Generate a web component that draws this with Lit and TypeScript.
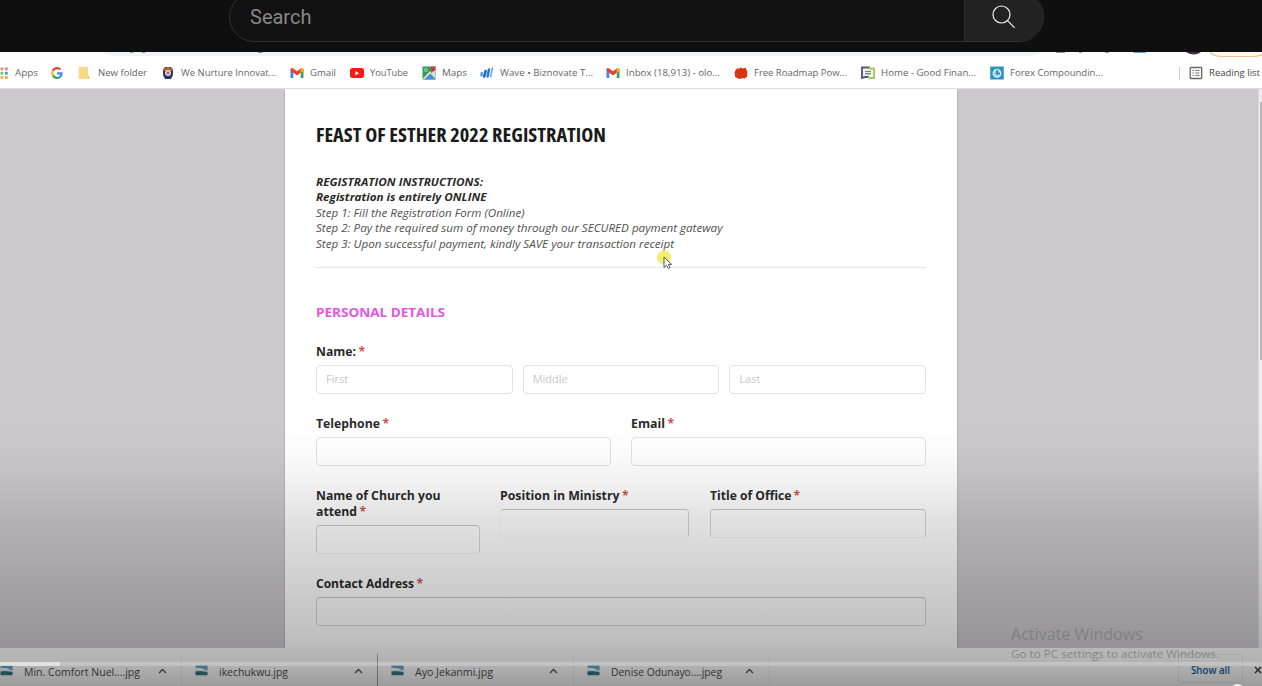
import { LitElement, html, css, svg, nothing } from "lit";
import { customElement, property } from "lit/decorators.js";

/** A single line of text condensed or widened to a given width. */
@customElement("fit-text")
class FitText extends LitElement {
  @property({ type: Number }) w = 0;
  @property() text = "";
  static styles = css`
    :host { display: block; white-space: nowrap; flex: none; }
    .inner { display: inline-block; transform-origin: 0 50%; white-space: pre; }
  `;
  render() {
    return html`<span class="inner">${this.text}</span>`;
  }
  updated() {
    this.style.width = this.w + "px";
    const el = this.renderRoot.querySelector(".inner") as HTMLElement;
    const natural = el.getBoundingClientRect().width;
    if (natural > 0 && this.w > 0) el.style.transform = `scaleX(${this.w / natural})`;
  }
}

const gmail = svg`<path d="M.5 3.500v8.500h2.800V6z" fill="#4285f4"/><path d="M13.500 3.500v8.500h-2.800V6z" fill="#34a853"/>
  <path d="M.5 3.500C.5 2 2 1.500 3.300 2.500L7 5.300l3.700-2.800c1.300-1 2.800-.5 2.800 1v1.300L7 9.600.5 4.800z" fill="#ea4335"/>
  <path d="M10.700 2.500c1.300-1 2.800-.5 2.800 1v1.300l-2.800 2.100z" fill="#fbbc04"/>`;

const icons: Record<string, unknown> = {
  apps: svg`<g><rect x="4.500" y="1.500" width="2.800" height="2.800" fill="#f08a80"/><rect x="9" y="1.500" width="2.800" height="2.800" fill="#e98a62"/>
    <rect x="4.500" y="5.800" width="2.800" height="2.800" fill="#77b88a"/><rect x="9" y="5.800" width="2.800" height="2.800" fill="#5f90e0"/>
    <rect x="4.500" y="10.100" width="2.800" height="2.800" fill="#efb45e"/><rect x="9" y="10.100" width="2.800" height="2.800" fill="#f0b540"/></g>`,
  google: svg`<g fill="none" stroke-width="2.200"><path d="M10.500 3.600A4.600 4.600 0 0 0 2.800 4.900" stroke="#ea4335"/>
    <path d="M2.800 4.900a4.700 4.700 0 0 0 0 4.400" stroke="#fbbc05"/><path d="M2.800 9.300a4.700 4.700 0 0 0 7.400 1.400" stroke="#34a853"/>
    <path d="M10.100 10.700A4.500 4.500 0 0 0 11.500 7.300H7" stroke="#4285f4"/></g>`,
  folder: svg`<path d="M.7 1H10v8.500l1.300 1V13H.7z" fill="#f9da84"/><path d="M10 9.500l1.300 1V13H10z" fill="#eec66c"/>`,
  badge: svg`<path d="M1.900 3.500L4 1h6l2.100 2.500-.3 6L10 13H4L2.200 9.500z" fill="#2b335f"/><path d="M1.700 4.800C2.200.2 11.800.2 12.300 4.800L10 5H4z" fill="#b4683a"/>
    <circle cx="7" cy="7" r="3" fill="#dccbd2"/><circle cx="7" cy="7" r="1.300" fill="#846a8c"/>`,
  gmail,
  youtube: svg`<rect x="0" y="2" width="14" height="10" rx="2.500" fill="#f51b12"/><path d="M5.400 5v4.300L9.100 7.200z" fill="#fff"/>`,
  maps: svg`<path d="M.5.500h13v13H.5z" fill="#2f9d5b"/><path d="M13.500.5v8L8.500 4.500V.5z" fill="#cf4a3d"/>
    <path d="M1.500 13.500L7.200 8.200l5.800 5.300z" fill="#4c8df5"/><path d="M8 7.500L13.500 4v9z" fill="#d8dadd"/><path d="M.7 12.800L8 5l1 2-7 6.500z" fill="#e8dfc4"/>
    <circle cx="4" cy="4" r="1.600" fill="#57b47d" stroke="#a9d9bb" stroke-width=".7"/><circle cx="11.300" cy="3.500" r="1.100" fill="#94322a"/>`,
  wave: svg`<g stroke-linecap="round" stroke-width="2.500"><path d="M1.800 7l-.3 2.300" stroke="#4b9be9"/><path d="M5.600 5L4.200 10.500" stroke="#1a62cf"/>
    <path d="M9 3.500L7.600 10.500" stroke="#2a76da"/><path d="M12.500 2L10.700 10.500" stroke="#65b1ef" stroke-width="1.700"/></g>`,
  roadmap: svg`<path d="M3 2.300l2 .4L7 1.500l2 1L11.700 1.800l.6 2 1.200 2-.4 2 .1 2.700-2.500 2-2.500-.3-2.700.7L3 11.900.8 10.500l.2-2L.5 6.500 1.500 4.300z" fill="#d8350f"/>`,
  home: svg`<path d="M1 1.500h7v9.500H4L1 12z" fill="#f2f3f7" stroke="#555c74" stroke-width="1.900"/><path d="M7 2.500h6v9.500H7.500" fill="#f1f7e1" stroke="#a4c865" stroke-width="1.900"/>
    <path d="M4 5.500h6M4 7.600h6" stroke="#728192" stroke-width="1.100"/>`,
  forex: svg`<path d="M.2.500h13.600v13H.2z" fill="#2c95bd"/><circle cx="7" cy="7.300" r="3.700" fill="#8ecbe3" stroke="#d9f0f9" stroke-width="1.500"/>
    <path d="M7 3.500v4h3" stroke="#2381ad" stroke-width="1.300" fill="none"/>`,
  list: svg`<rect x="1.200" y="1.500" width="11.500" height="11" rx=".8" fill="none" stroke="#666" stroke-width="1.300"/>
    <path d="M3.500 4.500h1.600M3.500 7h1.600M3.500 9.500h1.600M6.300 4.500h4.200M6.300 7h4.200M6.300 9.500h4.200" stroke="#777" stroke-width="1.100"/>`,
  image: svg`<path d="M1.500 1.500h12v11h-12z" fill="#d3e0e6"/><path d="M1.500 1.500h12v5L9 4.500l-7.500-.7z" fill="#5ea6cf"/><path d="M1.500 3.800l6 .5 4 2.200-10 .5z" fill="#edf4f6"/><path d="M1.500 7.500l4-.6 8 1.200v3h-12z" fill="#37757d"/>`,
};
const icon = (name: string) => html`<svg class="ico" viewBox="0 0 14 14">${icons[name]}</svg>`;

/* icon, label, slot width, label width */
const bookmarks: [string, string, number, number][] = [
  ["apps", "Apps", 54, 23],
  ["google", "", 28, 0],
  ["folder", "New folder", 83, 49],
  ["badge", "We Nurture Innovat...", 129, 95],
  ["gmail", "Gmail", 60, 26],
  ["youtube", "YouTube", 71.5, 38],
  ["maps", "Maps", 58.5, 25],
  ["wave", "Wave • Biznovate T...", 126, 93],
  ["gmail", "Inbox (18,913) - olo...", 128, 94],
  ["roadmap", "Free Roadmap Pow...", 127, 93],
  ["home", "Home - Good Finan...", 129, 95],
  ["forex", "Forex Compoundin...", 149, 93],
];

/* label, label width, slot width, caret offset */
const downloads: [string, number, number, number][] = [
  ["Min. Comfort Nuel....jpg", 116, 195, 157],
  ["ikechukwu.jpg", 69, 196, 158],
  ["Ayo Jekanmi.jpg", 78, 196, 157],
  ["Denise Odunayo....jpeg", 111, 196, 157],
];

@customElement("app-root")
class AppRoot extends LitElement {
  static styles = css`
    :host { display: block; width: 1262px; height: 686px; overflow: hidden; position: relative; background: #0f0f0f; font-family: "Open Sans", sans-serif; }
    * { box-sizing: border-box; }
    .top { height: 52px; display: flex; align-items: flex-start; padding-left: 229px; background: #0f0f0f; overflow: hidden; }
    .shape { display: flex; width: 815px; height: 50px; margin-top: -8px; border: 1px solid #303030; border-radius: 25px; overflow: hidden; background: #121212; flex: none; }
    .query { width: 734px; padding: 7px 0 0 20px; color: #888; font: 400 20px/34px Roboto, sans-serif; }
    .go { flex: 1; background: #222; border-left: 1px solid #303030; padding: 11px 0 0 27px; }
    .go svg { width: 24px; height: 24px; display: block; }
    .video { height: 634px; background: #fff; display: flex; flex-direction: column; color: #111; }
    .address { height: 5px; flex: none; background: #fff; }
    .address svg { display: block; width: 1262px; height: 5px; }
    .marks { height: 32px; flex: none; display: flex; align-items: center; background: #fff; font-size: 9.800px; line-height: 16px; color: #666; }
    .mark { display: flex; align-items: center; gap: 6px; flex: none; }
    .mark:first-child { margin-left: -4px; gap: 5px; }
    .ico { width: 14px; height: 14px; display: block; flex: none; }
    .reading { display: flex; align-items: center; gap: 6px; border-left: 1px solid #ccc; height: 13px; padding-left: 9px; margin-left: 40px; color: #444; }
    .canvas { height: 559px; flex: none; background: #cbc9cc; display: flex; padding-left: 285px; box-shadow: 0 -1px #dedede; }
    .page { width: 672px; background: #fff; padding: 32px 31px 0 31px; box-shadow: 0 0 2px #999; clip-path: inset(0 -3px); }
    .rail { margin-left: auto; width: 4px; background: #ececec; border-left: 1px solid #dadada; }
    .thumb { margin: 13px 0 0 1px; height: 258px; background: #b9b9bb; }
    .title { font-size: 19.500px; line-height: 28px; font-weight: 700; font-stretch: 75%; color: #1a1a1a; }
    .steps { margin-top: 25px; font-size: 11.200px; line-height: 15.400px; font-style: italic; color: #505050; border-bottom: 1px solid #e6e6e6; height: 94px; }
    .strong { font-weight: 700; color: #2a2a2a; }
    .section { margin-top: 34px; font-size: 13px; line-height: 20px; font-weight: 700; color: #e456e0; }
    .row { display: flex; align-items: flex-start; }
    .label { display: flex; gap: 3px; font-size: 12.200px; font-weight: 700; line-height: 16px; color: #2a2a2a; }
    .req { color: #d0504b; margin-left: -.5px; }
    .field { height: 29px; border: 1px solid #e2e2e5; border-radius: 4px; font-size: 11px; line-height: 26px; color: #c8c8c8; padding-left: 9px; }
    .faint { border-color: #c8c8c8 #d6d6d6 #d8d8d8 #d6d6d6; }
    .short { border-bottom-color: #f0f0f0; }
    .open { border-color: #c8c8c8 #d4d4d4 #f8f8f8 #f8f8f8; }
    .names { margin-top: 5px; gap: 10px; }
    .names .field { flex: 1; }
    .g22 { margin-top: 22px; }
    .in5 { margin-top: 5px; }
    .pair { gap: 20px; } .pair > div { flex: 1; }
    .church { width: 164px; margin-right: 20px; }
    .post { width: 189px; margin-right: 20.500px; }
    .office { flex: 1; }
    .shelf { flex: 1; display: flex; align-items: flex-start; padding-top: 6px; background: #fafafa; font-size: 11px; color: #4a4a4a; }
    .file { display: flex; align-items: center; height: 34px; border-right: 1px solid #ededed; padding-left: 12px; }
    .file:first-child { margin-left: -13px; }
    .file:nth-child(2) { border-right-color: #a0a0a0; }
    .file .ico { margin-right: 11px; }
    .caret { width: 9px; height: 6px; display: block; }
    .all { margin-left: auto; width: 65px; height: 29px; border: 1px solid #e8e8e8; border-radius: 3px; font-size: 10.500px; font-weight: 600; line-height: 30px; padding-left: 12px; color: #145b9c; margin-right: 11px; }
    .x { width: 8px; height: 30px; padding-top: 12px; flex: none; }
    .x svg { width: 8px; height: 8px; display: block; }
    .scrim { position: absolute; inset: 418px 0 0 0; background: linear-gradient(rgba(0,0,0,0), rgba(0,0,0,.01) 11%, rgba(0,0,0,.05) 23%, rgba(0,0,0,.12) 39%, rgba(0,0,0,.18) 58%, rgba(0,0,0,.24) 78%, rgba(0,0,0,.29) 92%, rgba(0,0,0,.38)); }
    .progress { position: absolute; left: 0; right: 0; top: 662px; height: 4px; background: rgba(255,255,255,.22); }
    .played { width: 60px; height: 4px; background: rgba(255,255,255,.5); }
    .activate { position: absolute; left: 1011px; top: 623px; color: rgba(105,105,105,.5); }
    .big { font-size: 15.500px; line-height: 23px; }
    .small { font-size: 11px; line-height: 16px; color: rgba(105,105,105,.65); }
    .pointer { position: absolute; left: 656px; top: 249px; width: 18px; height: 22px; }
    .knob { position: absolute; left: 1230px; top: 684px; width: 15px; height: 15px; border-radius: 50%; background: #eee; }
  `;

  label(text: string, w: number) {
    return html`<div class="label"><fit-text .text=${text} .w=${w}></fit-text><span class="req">*</span></div>`;
  }

  render() {
    return html`
      <div class="top">
        <div class="shape">
          <div class="query">Search</div>
          <div class="go"><svg viewBox="0 0 24 24" fill="none" stroke="#eee" stroke-width="1.200"><circle cx="9.500" cy="10.500" r="8.500"/><path d="M15.500 16.700l7 7"/></svg></div>
        </div>
      </div>
      <div class="video">
        <div class="address"><svg viewBox="0 0 1262 5">
          <path d="M103 0h938q-6 4-14 4H117q-8 0-14-4z" fill="#f1f2f6"/>
          <path d="M130 0h3M142 0h3M258 0h5M1056 0h9M1079 0h3M1105 0h4" stroke="#777" stroke-width="1.500"/>
          <path d="M1133 0h13" stroke="#3d8bd0" stroke-width="1.500"/><path d="M1186 0h15q-7 5-15 0z" fill="#433043"/>
          <path d="M1210 0q4 4 12 4h34q4 0 7-2V0z" fill="#fff8ef"/><path d="M1210 0q4 4.500 12 4.500h30q6 0 10-2" fill="none" stroke="#f2c08a" stroke-width="1.200"/>
        </svg></div>
        <div class="marks">
          ${bookmarks.map(([i, t, slot, w]) => html`<div class="mark" style="width:${slot}px">${icon(i)}${t ? html`<fit-text .text=${t} .w=${w}></fit-text>` : nothing}</div>`)}
          <div class="reading">${icon("list")}<fit-text .text=${"Reading list"} .w=${51}></fit-text></div>
        </div>
        <div class="canvas">
          <div class="page">
            <fit-text class="title" .text=${"FEAST OF ESTHER 2022 REGISTRATION"} .w=${290}></fit-text>
            <div class="steps">
              <fit-text class="strong" .text=${"REGISTRATION INSTRUCTIONS:"} .w=${167}></fit-text>
              <fit-text class="strong" .text=${"Registration is entirely ONLINE"} .w=${170.5}></fit-text>
              <fit-text .text=${"Step 1: Fill the Registration Form (Online)"} .w=${208.5}></fit-text>
              <fit-text .text=${"Step 2: Pay the required sum of money through our SECURED payment gateway"} .w=${406.5}></fit-text>
              <fit-text .text=${"Step 3: Upon successful payment, kindly SAVE your transaction receipt"} .w=${358}></fit-text>
            </div>
            <fit-text class="section" .text=${"PERSONAL DETAILS"} .w=${129}></fit-text>
            <div class="g22">${this.label("Name:", 40)}</div>
            <div class="row names">
              <div class="field">First</div><div class="field">Middle</div><div class="field">Last</div>
            </div>
            <div class="row pair g22">
              <div>${this.label("Telephone", 64)}<div class="field in5"></div></div>
              <div>${this.label("Email", 34)}<div class="field in5"></div></div>
            </div>
            <div class="row g22">
              <div class="church"><fit-text class="label" .text=${"Name of Church you"} .w=${124.5}></fit-text>${this.label("attend", 41)}<div class="field faint short in5"></div></div>
              <div class="post">${this.label("Position in Ministry", 119.5)}<div class="field open in5"></div></div>
              <div class="office">${this.label("Title of Office", 81.5)}<div class="field faint short in5"></div></div>
            </div>
            <div class="g22">${this.label("Contact Address", 98)}<div class="field faint in5"></div></div>
          </div>
          <div class="rail"><div class="thumb"></div></div>
        </div>
        <div class="shelf">
          ${downloads.map(([t, w, slot, c]) => html`<div class="file" style="width:${slot}px">${icon("image")}<fit-text .text=${t} .w=${w}></fit-text><svg class="caret" style="margin-left:${c - 23 - w}px" viewBox="0 0 9 6"><path d="M1 5l3.500-3.500L8 5" fill="none" stroke="#555" stroke-width="1.400"/></svg></div>`)}
          <div class="all"><fit-text .text=${"Show all"} .w=${39}></fit-text></div>
          <div class="x"><svg viewBox="0 0 8 8"><path d="M1 1l6 6M7 1L1 7" stroke="#333" stroke-width="1.400"/></svg></div>
        </div>
      </div>
      <div class="scrim"></div>
      <div class="activate">
        <fit-text class="big" .text=${"Activate Windows"} .w=${132}></fit-text>
        <fit-text class="small" .text=${"Go to PC settings to activate Windows."} .w=${208}></fit-text>
      </div>
      <div class="progress"><div class="played"></div></div>
      <div class="knob"></div>
      <svg class="pointer" viewBox="0 0 18 22"><circle cx="8" cy="8.500" r="7" fill="#f3ea48" opacity=".8"/><path d="M8 8v10.500l2.500-2.300 1.800 3.300 1.800-.9-1.700-3.200h3.200z" fill="#fff" stroke="#555" stroke-width="1"/></svg>
    `;
  }
}
